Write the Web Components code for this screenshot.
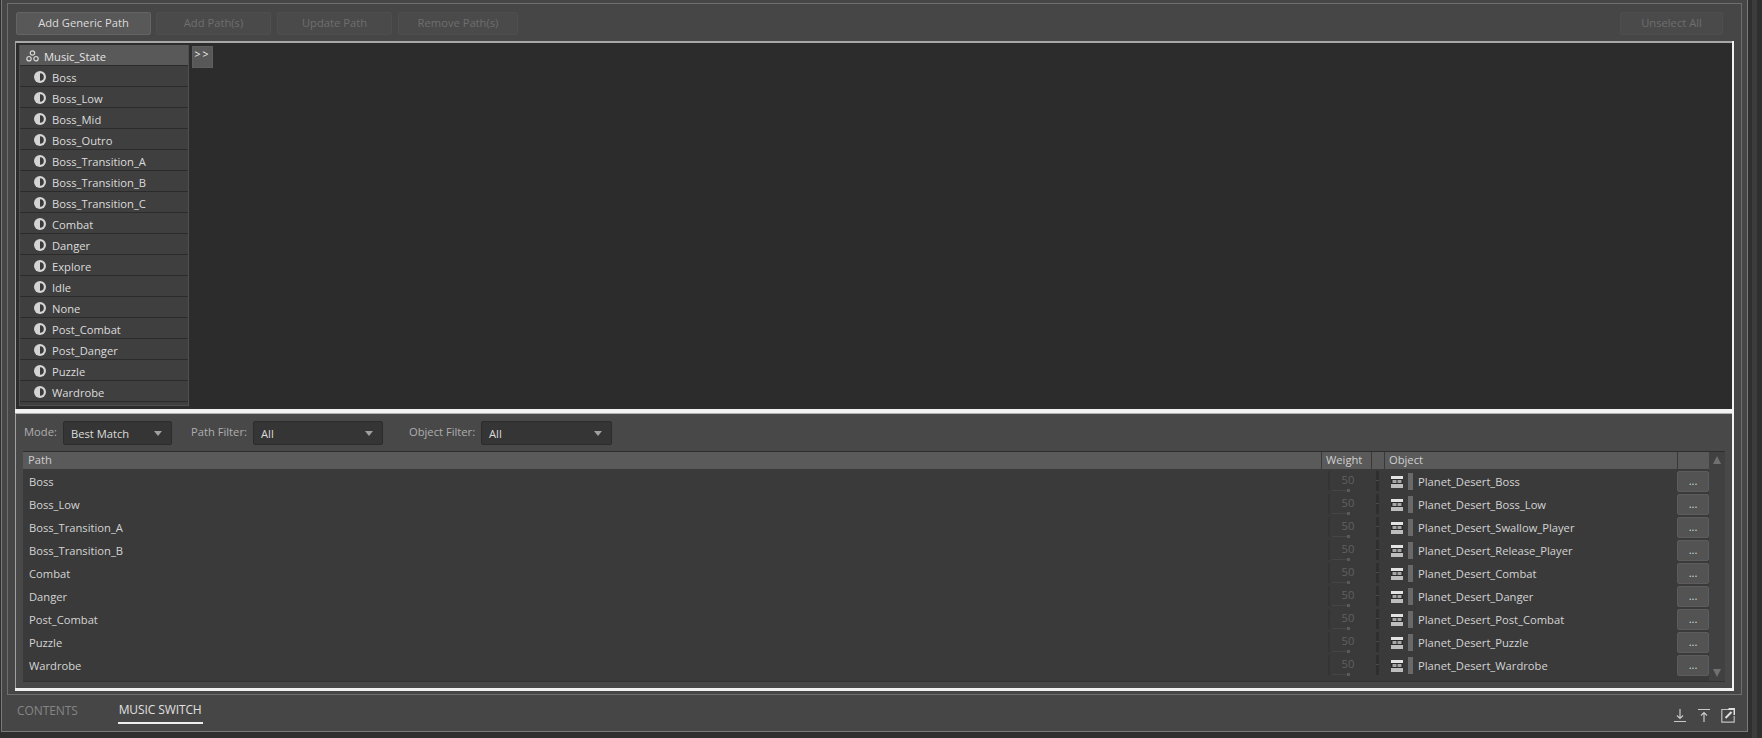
<!DOCTYPE html>
<html>
<head>
<meta charset="utf-8">
<title>Music Switch</title>
<style>
    html,body{
        margin:0;
        height:100%;
        overflow:hidden;
        background:#2f2f2f;
        color:#d8d8d8;
        font-family:"Open Sans","Noto Sans",sans-serif;
        font-size:11.2px;
    }
</style>
</head>
<body>
<wk-app></wk-app>
<script>
const halfIcon = `<svg width="12" height="12" viewBox="0 0 12 12"><circle cx="6" cy="6" r="6" fill="#d4d4d4"/><path d="M6 2.2a3.8 3.8 0 0 1 0 7.6z" fill="#3a3a3a"/></svg>`;
const groupIcon = `<svg width="13" height="12" viewBox="0 0 13 12" fill="none" stroke="#d8d8d8" stroke-width="1.2"><circle cx="6.5" cy="3" r="2.2"/><circle cx="3" cy="8.7" r="2.2"/><circle cx="10" cy="8.7" r="2.2"/></svg>`;
const boxIcon = `<svg width="12" height="12" viewBox="0 0 12 12"><rect width="12" height="12" fill="#e2e2e2"/><rect y="3" width="12" height="5" fill="#2b2b2b"/><rect x="1.5" y="4" width="4" height="3" fill="#a6a6a6"/><rect x="6.5" y="4" width="4" height="3" fill="#a6a6a6"/><rect y="8" width="12" height="4" fill="#bdbdbd"/></svg>`;

class WkButton extends HTMLElement {
    constructor (){
        super();
        this.root=this.attachShadow({mode: 'open'});
        this.root.innerHTML = `
            <style>
                :host{
                    display:flex;
                    align-items:center;
                    justify-content:center;
                    box-sizing:border-box;
                    height:23px;
                    padding-bottom:2px;
                    background:#4a4a4a;
                    border:1px solid #4e4e4e;
                    border-radius:2px;
                    color:#6e6e6e;
                }
                :host([on]){
                    background:#585858;
                    border-color:#646464;
                    color:#dcdcdc;
                }
            </style>
            <slot></slot>
        `;
    }
}
customElements.define('wk-button',WkButton);

class WkStateList extends HTMLElement {
    constructor (){
        super();
        this.root=this.attachShadow({mode: 'open'});
        const names=['Boss','Boss_Low','Boss_Mid','Boss_Outro','Boss_Transition_A','Boss_Transition_B','Boss_Transition_C','Combat','Danger','Explore','Idle','None','Post_Combat','Post_Danger','Puzzle','Wardrobe'];
        this.root.innerHTML = `
            <style>
                :host{
                    display:block;
                    box-sizing:border-box;
                    width:170px;
                    height:361px;
                    background:#3f3f3f;
                    border:1px solid #505050;
                    border-top:none;
                    color:#dcdcdc;
                }
                .head,.row{
                    display:flex;
                    align-items:center;
                    box-sizing:border-box;
                    height:21px;
                    padding-top:2px;
                    border-bottom:1px solid #2b2b2b;
                }
                .head{
                    background:#595959;
                    padding-left:6px;
                    gap:5px;
                    color:#e4e4e4;
                }
                .row{
                    padding-left:14px;
                    gap:6px;
                }
                svg{flex:none;}
            </style>
            <div class="head">${groupIcon}<span>Music_State</span></div>
            ${names.map(n=>`<div class="row">${halfIcon}<span>${n}</span></div>`).join('')}
        `;
    }
}
customElements.define('wk-state-list',WkStateList);

class WkSelect extends HTMLElement {
    constructor (){
        super();
        this.root=this.attachShadow({mode: 'open'});
        this.root.innerHTML = `
            <style>
                :host{
                    display:flex;
                    align-items:center;
                    box-sizing:border-box;
                    height:24px;
                    background:#353535;
                    border:1px solid #2c2c2c;
                    border-radius:2px;
                    padding:0 9px 0 7px;
                    color:#dcdcdc;
                }
                span{flex:1;}
                i{
                    width:0;height:0;
                    border-left:4.5px solid transparent;
                    border-right:4.5px solid transparent;
                    border-top:5px solid #a0a0a0;
                }
            </style>
            <span><slot></slot></span><i></i>
        `;
    }
}
customElements.define('wk-select',WkSelect);

class WkPathRow extends HTMLElement {
    constructor (){
        super();
        this.root=this.attachShadow({mode: 'open'});
        this.root.innerHTML = `
            <style>
                :host{
                    display:flex;
                    align-items:center;
                    height:23px;
                    color:#d4d4d4;
                }
                .path{flex:1;padding-left:6px;}
                .weight{
                    width:62px;
                    height:21px;
                    display:flex;
                    align-items:flex-start;
                    padding-left:6px;
                    box-sizing:border-box;
                }
                .strip{
                    width:2px;
                    height:20px;
                    margin-right:2px;
                    background:#343434;
                }
                .knob{
                    width:32px;
                    height:21px;
                    position:relative;
                    text-align:center;
                    color:#606060;
                    line-height:17px;
                    margin-right:12px;
                }
                .knob::before{
                    content:'';
                    position:absolute;
                    left:0;
                    bottom:1px;
                    width:18px;
                    height:1px;
                    background:#464646;
                }
                .knob::after{
                    content:'';
                    position:absolute;
                    left:15px;
                    bottom:0;
                    width:3px;
                    height:3px;
                    background:#5a5a5a;
                }
                .tick{
                    width:3px;
                    height:20px;
                    background:linear-gradient(#2f2f2f 0 9px,#4a4a4a 9px 10px,#2f2f2f 10px);
                }
                .object{
                    width:293px;
                    display:flex;
                    align-items:center;
                    padding-left:7px;
                    box-sizing:border-box;
                }
                .bar{
                    width:5px;
                    height:17px;
                    background:#696969;
                    margin:0 5px;
                }
                .more{
                    width:32px;
                    height:21px;
                    box-sizing:border-box;
                    background:#535353;
                    border:1px solid #5c5c5c;
                    border-radius:2px;
                    text-align:center;
                    line-height:18px;
                    color:#dcdcdc;
                    font-size:11px;
                }
            </style>
            <div class="path">${this.getAttribute('path')}</div>
            <div class="weight"><div class="strip"></div><div class="knob">50</div><div class="tick"></div></div>
            <div class="object">${boxIcon}<div class="bar"></div><slot></slot></div>
            <div class="more">...</div>
        `;
    }
}
customElements.define('wk-path-row',WkPathRow);

class WkPathTable extends HTMLElement {
    constructor (){
        super();
        this.root=this.attachShadow({mode: 'open'});
        const rows=[['Boss','Boss'],['Boss_Low','Boss_Low'],['Boss_Transition_A','Swallow_Player'],['Boss_Transition_B','Release_Player'],['Combat','Combat'],['Danger','Danger'],['Post_Combat','Post_Combat'],['Puzzle','Puzzle'],['Wardrobe','Wardrobe']];
        this.root.innerHTML = `
            <style>
                :host{
                    display:flex;
                    box-sizing:border-box;
                    height:231px;
                    margin:6px 7px 0 7px;
                    background:#3a3a3a;
                    border-top:1px solid #2e2e2e;
                    border-bottom:1px solid #333;
                }
                .main{flex:1;min-width:0;}
                .head{
                    display:flex;
                    align-items:center;
                    height:17px;
                    background:#5a5a5a;
                    color:#cfcfcf;
                }
                .head div{
                    box-sizing:border-box;
                    height:17px;
                    line-height:16px;
                    border-left:1px solid #383838;
                    padding-left:3px;
                }
                .head .p{flex:1;border-left:none;padding-left:5px;}
                .head .w{width:50px;padding-left:4px;}
                .head .s{width:13px;}
                .head .o{width:293px;padding-left:4px;}
                .head .m{width:32px;}
                .rows{padding-top:1px;}
                .bar{
                    width:16px;
                    background:#414141;
                    display:flex;
                    flex-direction:column;
                    justify-content:space-between;
                    align-items:center;
                    padding:4px 0;
                    box-sizing:border-box;
                }
                .bar i{
                    width:0;height:0;
                    border-left:4px solid transparent;
                    border-right:4px solid transparent;
                }
                .up{border-bottom:8px solid #707070;}
                .down{border-top:8px solid #707070;}
            </style>
            <div class="main">
                <div class="head"><div class="p">Path</div><div class="w">Weight</div><div class="s"></div><div class="o">Object</div><div class="m"></div></div>
                <div class="rows">
                    ${rows.map(r=>`<wk-path-row path="${r[0]}">Planet_Desert_${r[1]}</wk-path-row>`).join('')}
                </div>
            </div>
            <div class="bar"><i class="up"></i><i class="down"></i></div>
        `;
    }
}
customElements.define('wk-path-table',WkPathTable);

class WkTabs extends HTMLElement {
    constructor (){
        super();
        this.root=this.attachShadow({mode: 'open'});
        this.root.innerHTML = `
            <style>
                :host{
                    display:flex;
                    height:36px;
                    padding:0 7px 0 10px;
                    color:#858585;
                    font-size:12px;
                }
                .tab{
                    box-sizing:border-box;
                    height:29px;
                    line-height:31px;
                    margin-right:40px;
                    letter-spacing:-.1px;
                }
                .on{
                    color:#e0e0e0;
                    border-bottom:2px solid #ededed;
                    padding:0 1px;
                    line-height:29px;
                }
                .icons{
                    margin-left:auto;
                    display:flex;
                    gap:10px;
                    padding-top:13px;
                    height:15px;
                }
            </style>
            <div class="tab">CONTENTS</div>
            <div class="tab on">MUSIC SWITCH</div>
            <div class="icons">
                <svg width="14" height="15" viewBox="0 0 14 15" fill="none" stroke="#c8c8c8" stroke-width="1.2"><path d="M1 13.5h12M7 1v9M4 7.5L7 10.5L10 7.5"/></svg>
                <svg width="14" height="15" viewBox="0 0 14 15" fill="none" stroke="#c8c8c8" stroke-width="1.2"><path d="M1 1.5h12M7 14V5M4 7.5L7 4.5L10 7.5"/></svg>
                <svg width="14" height="15" viewBox="0 0 14 15" fill="none"><path d="M8 1.5H.8v12.7h12.4V8" stroke="#c0c0c0" stroke-width="1.2"/><path d="M4.5 10L10.5 4M7.5 1h6v6" stroke="#e0e0e0" stroke-width="2"/></svg>
            </div>
        `;
    }
}
customElements.define('wk-tabs',WkTabs);

class WkApp extends HTMLElement {
    constructor (){
        super();
        this.root=this.attachShadow({mode: 'open'});
        this.root.innerHTML = `
            <style>
                :host{
                    display:flex;
                    height:738px;
                }
                .outer{
                    box-sizing:border-box;
                    width:1747px;
                    height:732px;
                    margin-left:1px;
                    padding:3px 5px 0;
                    border:1px solid #7a7a7a;
                    border-top:none;
                    background:#464646;
                }
                .strip{
                    width:5px;
                    margin-left:4px;
                    height:738px;
                    background:#3c3c3c;
                }
                .inner{
                    box-sizing:border-box;
                    height:692px;
                    padding:8px 7px 0;
                    border:1px solid #6e6e6e;
                }
                .tools{
                    display:flex;
                    gap:5px;
                    height:23px;
                    margin-bottom:6px;
                }
                .b1{width:135px;margin-left:1px;}
                .b2{width:115px;}
                .b3{width:115px;margin-left:1px;}
                .b4{width:120px;margin-left:1px;}
                .b5{width:103px;margin-left:auto;margin-right:11px;}
                .panel{
                    box-sizing:border-box;
                    height:650px;
                    display:flex;
                    flex-direction:column;
                    border:solid #f2f2f2;
                    border-width:0 2px 3px 0;
                }
                .upper{
                    height:368px;
                    flex:none;
                    box-sizing:border-box;
                    background:#2c2c2c;
                    border-top:2px solid #a8a8a8;
                    border-left:1px solid #a0a0a0;
                    padding:2px 0 0 3px;
                    display:flex;
                    gap:3px;
                }
                .expand{
                    box-sizing:border-box;
                    width:21px;
                    height:22px;
                    margin-top:1px;
                    background:#585858;
                    border:1px solid #5e5e5e;
                    color:#f0f0f0;
                    font-size:10.5px;
                    letter-spacing:2px;
                    line-height:14px;
                    text-align:center;
                }
                .rule{
                    height:5px;
                    flex:none;
                    background:#f2f2f2;
                    border-bottom:1px solid #b0b0b0;
                    box-sizing:border-box;
                }
                .lower{
                    flex:1;
                    background:#484848;
                    border-left:1px solid #a0a0a0;
                    min-height:0;
                }
                .filters{
                    display:flex;
                    align-items:center;
                    height:24px;
                    margin-top:7px;
                    padding-left:8px;
                    color:#aeaeae;
                }
                .filters span{margin-top:-3px;}
                .l1{width:39px;}
                .m{width:109px;margin-right:19px;}
                .l2{width:62px;}
                .p{width:130px;margin-right:26px;}
                .l3{width:72px;}
                .o{width:131px;}
            </style>
            <div class="outer">
                <div class="inner">
                    <div class="tools">
                        <wk-button class="b1" on>Add Generic Path</wk-button>
                        <wk-button class="b2">Add Path(s)</wk-button>
                        <wk-button class="b3">Update Path</wk-button>
                        <wk-button class="b4">Remove Path(s)</wk-button>
                        <wk-button class="b5">Unselect All</wk-button>
                    </div>
                    <div class="panel">
                        <div class="upper">
                            <wk-state-list></wk-state-list>
                            <div class="expand">&gt;&gt;</div>
                        </div>
                        <div class="rule"></div>
                        <div class="lower">
                            <div class="filters">
                                <span class="l1">Mode:</span><wk-select class="m">Best Match</wk-select>
                                <span class="l2">Path Filter:</span><wk-select class="p">All</wk-select>
                                <span class="l3">Object Filter:</span><wk-select class="o">All</wk-select>
                            </div>
                            <wk-path-table></wk-path-table>
                        </div>
                    </div>
                </div>
                <wk-tabs></wk-tabs>
            </div>
            <div class="strip"></div>
        `;
    }
}
customElements.define('wk-app',WkApp);
</script>
</body>
</html>
